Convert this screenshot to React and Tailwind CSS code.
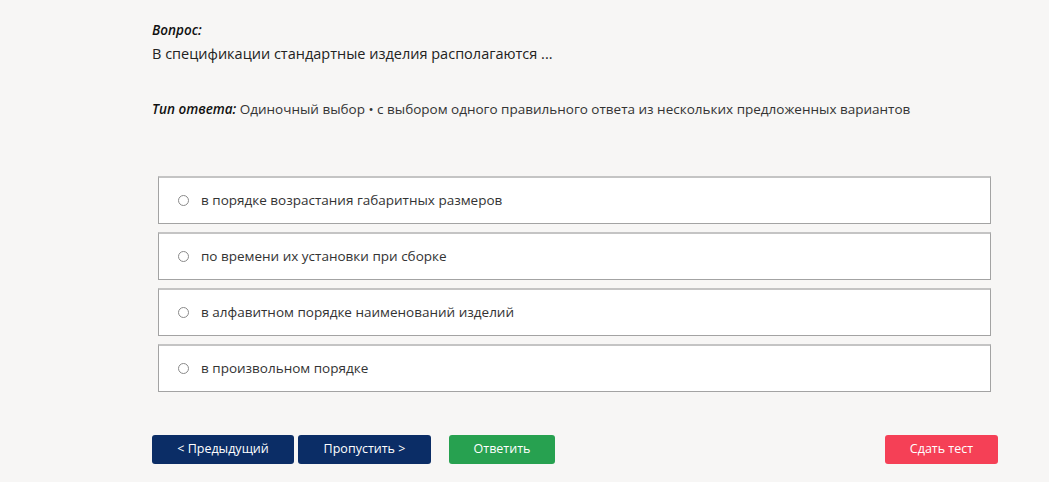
const options = [
  "в порядке возрастания габаритных размеров",
  "по времени их установки при сборке",
  "в алфавитном порядке наименований изделий",
  "в произвольном порядке",
];

export default function App() {
  return (
    <div
      className="min-h-[482px] w-full bg-[#f7f6f5] text-[#222]"
      style={{ fontFamily: '"Open Sans", "Noto Sans", sans-serif' }}
    >
      <div className="ml-[152px] w-[846px] pt-[20px]">
        {/* Question */}
        <div className="text-[13.5px] font-semibold italic leading-[20px] text-[#111]">Вопрос:</div>
        <div className="mt-[3px] text-[14.5px] leading-[22px] text-[#222]">
          В спецификации стандартные изделия располагаются ...
        </div>

        {/* Answer type */}
        <div className="mt-[34px] text-[13.5px] leading-[20px] text-[#333]">
          <span className="font-semibold italic text-[#111]">Тип ответа:</span> Одиночный выбор • с выбором
          одного правильного ответа из нескольких предложенных вариантов
        </div>

        {/* Options */}
        <div className="ml-[6px] mt-[57px] flex w-[833px] flex-col gap-[8px]">
          {options.map((o) => (
            <label
              key={o}
              className="flex h-[48px] items-center border border-t-2 border-[#a3a3a3] border-t-[#c4c4c4] bg-white pl-[19px] text-[13.5px] text-[#333]"
            >
              <span className="mr-[12px] h-[11px] w-[11px] rounded-full border border-[#8a8a8a] bg-white" />
              {o}
            </label>
          ))}
        </div>

        {/* Buttons */}
        <div className="mt-[43px] flex items-center text-[12.5px] text-white">
          <button className="h-[29px] w-[142px] rounded-[3px] bg-[#0b2d66]">&lt; Предыдущий</button>
          <button className="ml-[4px] h-[29px] w-[133px] rounded-[3px] bg-[#0b2d66]">Пропустить &gt;</button>
          <button className="ml-[18px] h-[29px] w-[106px] rounded-[3px] bg-[#27a150]">Ответить</button>
          <button className="ml-auto h-[29px] w-[113px] rounded-[3px] bg-[#f54056]">Сдать тест</button>
        </div>
      </div>
    </div>
  );
}
